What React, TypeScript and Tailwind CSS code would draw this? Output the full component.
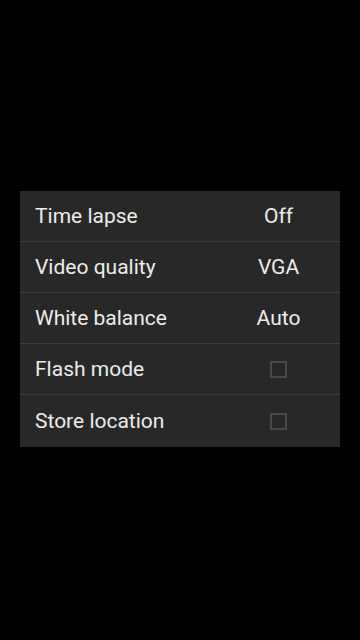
import React from "react";

type Row = { label: string; value?: string; checkbox?: boolean };

const rows: Row[] = [
  { label: "Time lapse", value: "Off" },
  { label: "Video quality", value: "VGA" },
  { label: "White balance", value: "Auto" },
  { label: "Flash mode", checkbox: true },
  { label: "Store location", checkbox: true },
];

export default function App() {
  return (
    <div
      className="w-[360px] h-[640px] bg-black flex flex-col items-center pt-[191px]"
      style={{ fontFamily: "Roboto, 'Noto Sans', sans-serif" }}
    >
      <div className="w-[320px] bg-[#282828] flex flex-col">
        {rows.map((r, i) => (
          <div
            key={r.label}
            className={`flex items-center ${i < rows.length - 1 ? "h-[51px] border-b border-[#3c3c3c]" : "h-[52px]"}`}
          >
            <div className="flex-1 pl-[15px] pt-[1px] text-[21px] text-[#ececec] leading-none">
              {r.label}
            </div>
            <div className="w-[120px] pr-[3px] pt-[1px] flex items-center justify-center text-[21px] text-[#ececec] leading-none">
              {r.checkbox ? (
                <div className="w-[17px] h-[17px] border-2 border-[#4a4a4a]" />
              ) : (
                r.value
              )}
            </div>
          </div>
        ))}
      </div>
    </div>
  );
}
